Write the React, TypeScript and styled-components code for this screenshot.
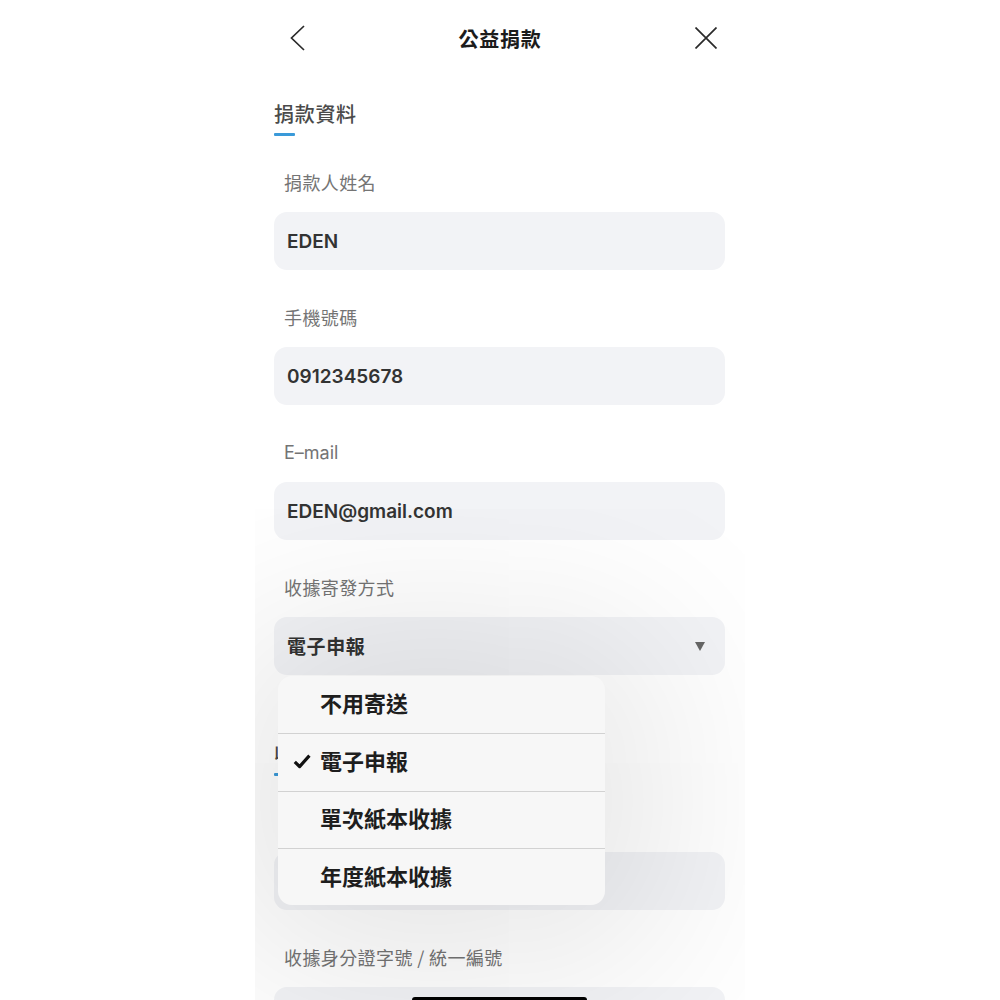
import React from "react";
import styled, { createGlobalStyle } from "styled-components";

const GlobalStyle = createGlobalStyle`
  html, body { margin: 0; padding: 0; background: #ffffff; }
  body { font-family: Inter, "Noto Sans CJK TC", sans-serif; }
  * { box-sizing: border-box; }
`;

const Phone = styled.div`
  position: relative;
  width: 490px;
  height: 1000px;
  margin: 0 auto;
  overflow: hidden;
  background: #ffffff;
`;

const Header = styled.header`
  display: grid;
  grid-template-columns: 1fr auto 1fr;
  align-items: center;
  height: 76px;
  padding: 0 28px;
`;

const IconButton = styled.button<{ $align: "start" | "end" }>`
  justify-self: ${(p) => p.$align};
  display: flex;
  align-items: center;
  justify-content: center;
  padding: 0;
  border: none;
  background: none;
  color: #2a2a2a;
`;

const Title = styled.h1`
  margin: 0;
  font-family: "Noto Sans CJK TC", sans-serif;
  font-size: 20px;
  font-weight: 700;
  letter-spacing: 0.7px;
  color: #1c1c1c;
`;

const Form = styled.main`
  display: flex;
  flex-direction: column;
  padding: 0 20px 0 19px;
`;

const Section = styled.section<{ $top: number }>`
  display: flex;
  flex-direction: column;
  padding-top: ${(p) => p.$top}px;
`;

const SectionTitle = styled.h2`
  margin: 0;
  padding-bottom: 2px;
  font-family: "Noto Sans CJK TC", sans-serif;
  font-size: 20px;
  line-height: 26px;
  font-weight: 500;
  letter-spacing: 0.7px;
  color: #4a4a4a;
`;

const TitleBar = styled.div`
  width: 21px;
  height: 3px;
  margin-top: 4px;
  border-radius: 1px;
  background: #3a9ad9;
`;

const Fields = styled.div`
  display: flex;
  flex-direction: column;
  gap: 36px;
  padding-top: 35px;
`;

const Field = styled.div`
  position: relative;
  display: flex;
  flex-direction: column;
  gap: 15px;
`;

const Label = styled.label`
  padding: 0 0 3px 10px;
  font-family: "Noto Sans CJK TC", sans-serif;
  font-size: 18px;
  line-height: 23px;
  letter-spacing: 0.4px;
  color: #747474;
`;

const LatinLabel = styled(Label)`
  font-family: Inter, "Noto Sans CJK TC", sans-serif;
  letter-spacing: 0;
`;

const InputBox = styled.div`
  display: flex;
  align-items: center;
  justify-content: space-between;
  height: 58px;
  padding: 0 20px 0 13px;
  border-radius: 13px;
  background: #f2f3f6;
  font-family: Inter, "Noto Sans CJK TC", sans-serif;
  font-size: 19px;
  font-weight: 600;
  color: #333333;
`;

const SelectValue = styled.span`
  padding-bottom: 2px;
  font-family: "Noto Sans CJK TC", sans-serif;
  font-size: 19px;
  font-weight: 700;
  letter-spacing: 0.6px;
  color: #333333;
`;

const Menu = styled.ul`
  position: absolute;
  z-index: 10;
  top: calc(100% + 1px);
  left: 4px;
  width: 327px;
  margin: 0;
  padding: 0;
  list-style: none;
  border-radius: 14px;
  background: #f7f7f7;
  box-shadow: 0 10px 200px 50px rgba(0, 0, 0, 0.11);
  overflow: hidden;
`;

const MenuItem = styled.li`
  display: flex;
  align-items: center;
  height: 57.3px;
  padding: 0 0 5px 15px;
  border-top: 1px solid #d2d2d2;
  &:first-child { border-top: none; }
`;

const CheckSlot = styled.span`
  display: flex;
  align-items: center;
  width: 27px;
  padding-top: 4px;
  color: #111111;
`;

const MenuText = styled.span`
  font-family: "Noto Sans CJK TC", sans-serif;
  font-size: 22px;
  font-weight: 600;
  color: #1e1e1e;
`;

const HomeIndicator = styled.div`
  position: absolute;
  left: 157px;
  bottom: -3px;
  width: 175px;
  height: 6px;
  border-radius: 3px;
  background: #000000;
`;

const options = ["不用寄送", "電子申報", "單次紙本收據", "年度紙本收據"];
const selected = "電子申報";

export default function App() {
  return (
    <>
      <GlobalStyle />
      <Phone>
        <Header>
          <IconButton $align="start" aria-label="back">
            <svg width="22" height="26" viewBox="0 0 22 26" fill="none">
              <path d="M21 1 L8.5 13 L21 25" stroke="currentColor" strokeWidth="1.7" />
            </svg>
          </IconButton>
          <Title>公益捐款</Title>
          <IconButton $align="end" aria-label="close">
            <svg width="22" height="22" viewBox="0 0 22 22" fill="none">
              <path d="M0.5 0.5 L21.5 21.5 M21.5 0.5 L0.5 21.5" stroke="currentColor" strokeWidth="1.7" />
            </svg>
          </IconButton>
        </Header>
        <Form>
          <Section $top={25}>
            <SectionTitle>捐款資料</SectionTitle>
            <TitleBar />
            <Fields>
              <Field>
                <Label>捐款人姓名</Label>
                <InputBox>EDEN</InputBox>
              </Field>
              <Field>
                <Label>手機號碼</Label>
                <InputBox>0912345678</InputBox>
              </Field>
              <Field>
                <LatinLabel>E–mail</LatinLabel>
                <InputBox>EDEN@gmail.com</InputBox>
              </Field>
              <Field>
                <Label>收據寄發方式</Label>
                <InputBox>
                  <SelectValue>{selected}</SelectValue>
                  <svg width="10" height="9" viewBox="0 0 10 9">
                    <path d="M0 0 H10 L5 9 Z" fill="#666666" />
                  </svg>
                </InputBox>
                <Menu>
                  {options.map((o) => (
                    <MenuItem key={o}>
                      <CheckSlot>
                        {o === selected && (
                          <svg width="18" height="15" viewBox="0 0 18 15" fill="none">
                            <path d="M1.8 7.8 L6.6 12.6 L16.4 1.6" stroke="currentColor" strokeWidth="3.2" strokeLinejoin="round" />
                          </svg>
                        )}
                      </CheckSlot>
                      <MenuText>{o}</MenuText>
                    </MenuItem>
                  ))}
                </Menu>
              </Field>
            </Fields>
          </Section>
          <Section $top={66}>
            <SectionTitle>收據資料</SectionTitle>
            <TitleBar />
            <Fields>
              <Field>
                <Label>收據抬頭</Label>
                <InputBox />
              </Field>
              <Field>
                <Label>收據身分證字號 / 統一編號</Label>
                <InputBox />
              </Field>
            </Fields>
          </Section>
        </Form>
        <HomeIndicator />
      </Phone>
    </>
  );
}
